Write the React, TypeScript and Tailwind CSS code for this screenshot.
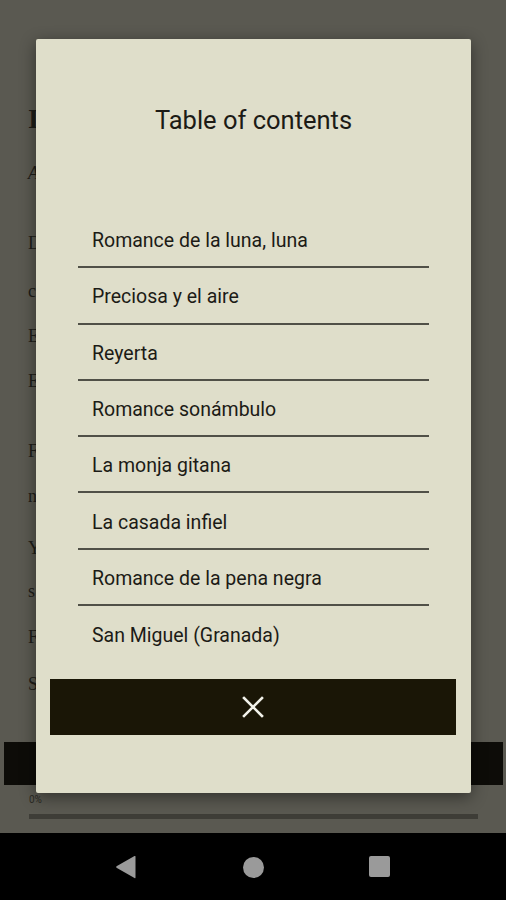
import React from "react";

const items = [
  "Romance de la luna, luna",
  "Preciosa y el aire",
  "Reyerta",
  "Romance sonámbulo",
  "La monja gitana",
  "La casada infiel",
  "Romance de la pena negra",
  "San Miguel (Granada)",
];

const bgLines: { t: string; cls: string }[] = [
  { t: "I", cls: "mt-[105px] h-[34px] text-[28px] font-bold" },
  { t: "A", cls: "mt-[20px] h-[28px] text-[18px] italic" },
  { t: "D", cls: "mt-[42px] h-[28px] text-[18px]" },
  { t: "c", cls: "mt-[20px] h-[28px] text-[18px]" },
  { t: "E", cls: "mt-[17px] h-[28px] text-[18px]" },
  { t: "E", cls: "mt-[17px] h-[28px] text-[18px]" },
  { t: "F", cls: "mt-[42px] h-[28px] text-[18px]" },
  { t: "n", cls: "mt-[17px] h-[28px] text-[18px]" },
  { t: "Y", cls: "mt-[24px] h-[28px] text-[18px]" },
  { t: "s", cls: "mt-[15px] h-[28px] text-[18px]" },
  { t: "F", cls: "mt-[18px] h-[28px] text-[18px]" },
  { t: "S", cls: "mt-[19px] h-[28px] text-[18px]" },
];

export default function App() {
  return (
    <div className="relative w-[506px] h-[900px] overflow-hidden bg-[#5a5951] flex flex-col" style={{ fontFamily: "Roboto, 'Liberation Sans', sans-serif" }}>
      {/* dimmed page behind dialog */}
      <div className="h-[833px] flex flex-col">
        <div className="flex flex-col pl-[28px] text-[#1e1d18]" style={{ fontFamily: "'Liberation Serif', serif" }}>
          {bgLines.map((l, i) => (
            <div key={i} className={`${l.cls} leading-[28px]`}>
              {l.t}
            </div>
          ))}
        </div>
        <div className="mt-[44px] ml-[4px] mr-[3px] h-[43px] bg-[#0d0c08]" />
        <div className="mt-[9px] pl-[29px] text-[10px] leading-[12px] text-[#2a2a24]">0%</div>
        <div className="mt-[8px] ml-[29px] w-[449px] h-[5px] bg-[#3e3d37]" />
      </div>

      {/* nav bar */}
      <div className="h-[67px] bg-black flex items-center relative">
        <svg className="absolute left-[115px] top-[22px]" width="22" height="24" viewBox="0 0 22 24">
          <path d="M20.5 1.5 L20.5 22.5 Q20.5 23.5 19.5 22.9 L1.5 12.8 Q0.8 12 1.5 11.2 L19.5 1.1 Q20.5 0.5 20.5 1.5Z" fill="#9a9a9a" />
        </svg>
        <div className="absolute left-[243px] top-[24px] w-[21px] h-[21px] rounded-full bg-[#9a9a9a]" />
        <div className="absolute left-[369px] top-[23px] w-[21px] h-[21px] rounded-[2px] bg-[#9a9a9a]" />
      </div>

      {/* dialog */}
      <div className="absolute left-[36px] top-[39px] w-[435px] h-[754px] bg-[#dfdeca] rounded-[2px] shadow-[0_4px_16px_rgba(0,0,0,0.45)] flex flex-col">
        <div className="mt-[65px] h-[32px] text-center text-[25.5px] leading-[32px] text-[#1c1b16]">Table of contents</div>
        <div className="mt-[76px] mx-[42px] flex flex-col">
          {items.map((t, i) => (
            <div
              key={t}
              className={`h-[56.3px] box-border flex items-center pl-[14px] pt-[3px] text-[19.5px] text-[#1c1b16] ${i < items.length - 1 ? "border-b-2 border-[#505047]" : ""}`}
            >
              {t}
            </div>
          ))}
        </div>
        <button className="mt-[17px] ml-[14px] mr-[15px] h-[56px] bg-[#1a1606] flex items-center justify-center">
          <svg width="22" height="22" viewBox="0 0 22 22">
            <path d="M2 2 L20 20 M20 2 L2 20" stroke="#f2f2ea" strokeWidth="2.6" strokeLinecap="square" />
          </svg>
        </button>
      </div>
    </div>
  );
}
